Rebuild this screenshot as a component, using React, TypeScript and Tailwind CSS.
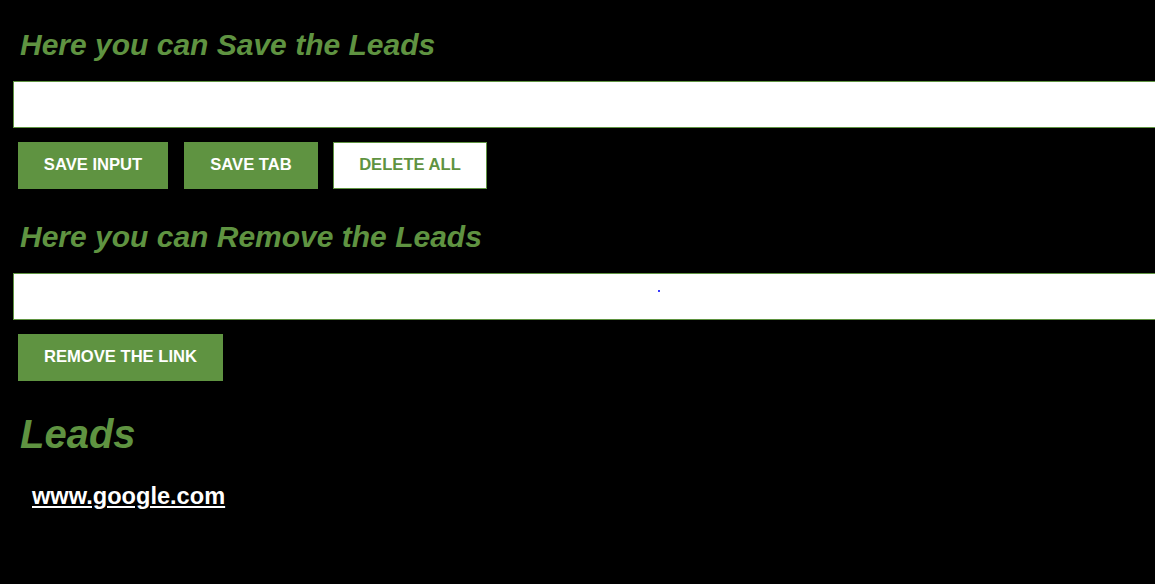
import React from "react";

function GreenButton({ label, className = "" }: { label: string; className?: string }) {
  return (
    <button
      className={`h-[47px] bg-[#5f9341] pb-[2px] text-center text-[16.6px] font-bold leading-[18px] text-white ${className}`}
    >
      {label}
    </button>
  );
}

export default function App() {
  const leads = ["www.google.com"];

  return (
    <div
      className="min-h-screen w-full overflow-hidden bg-black text-white"
      style={{ fontFamily: '"Liberation Sans", Arial, sans-serif' }}
    >
      <div className="pl-[13px] pt-[28px]">
        <h2 className="pl-[7px] text-[30px] font-bold italic leading-[34px] text-[#5f9341]">
          Here you can Save the Leads
        </h2>
        <input
          type="text"
          className="mt-[19px] block h-[47px] w-[calc(100%+40px)] border border-[#5f9341] bg-white px-[10px] text-black outline-none"
        />
        <div className="mt-[14px] flex pl-[5px]">
          <GreenButton label="SAVE INPUT" className="w-[150px]" />
          <GreenButton label="SAVE TAB" className="ml-[16px] w-[134px]" />
          <button className="ml-[15px] h-[47px] w-[154px] border border-[#5f9341] bg-white pb-[2px] text-center text-[16.6px] font-bold leading-[18px] text-[#5f9341]">
            DELETE ALL
          </button>
        </div>

        <h2 className="mt-[31px] pl-[7px] text-[30px] font-bold italic leading-[34px] text-[#5f9341]">
          Here you can Remove the Leads
        </h2>
        <div className="relative mt-[19px]">
          <input
            type="text"
            className="block h-[47px] w-[calc(100%+40px)] border border-[#5f9341] bg-white px-[10px] text-black outline-none"
          />
          <span className="absolute left-[645px] top-[17px] h-[2px] w-[2px] bg-[#3a3aff]" />
        </div>
        <div className="mt-[14px] flex pl-[5px]">
          <GreenButton label="REMOVE THE LINK" className="w-[205px]" />
        </div>

        <h1 className="mt-[30px] pl-[7px] text-[40px] font-bold italic leading-[46px] text-[#5f9341]">
          Leads
        </h1>
        <ul className="mt-[25px] pl-[19px]">
          {leads.map((lead) => (
            <li key={lead} className="text-[23.6px] font-bold leading-[28px]">
              <a href="#" className="text-white underline">
                {lead}
              </a>
            </li>
          ))}
        </ul>
      </div>
    </div>
  );
}
